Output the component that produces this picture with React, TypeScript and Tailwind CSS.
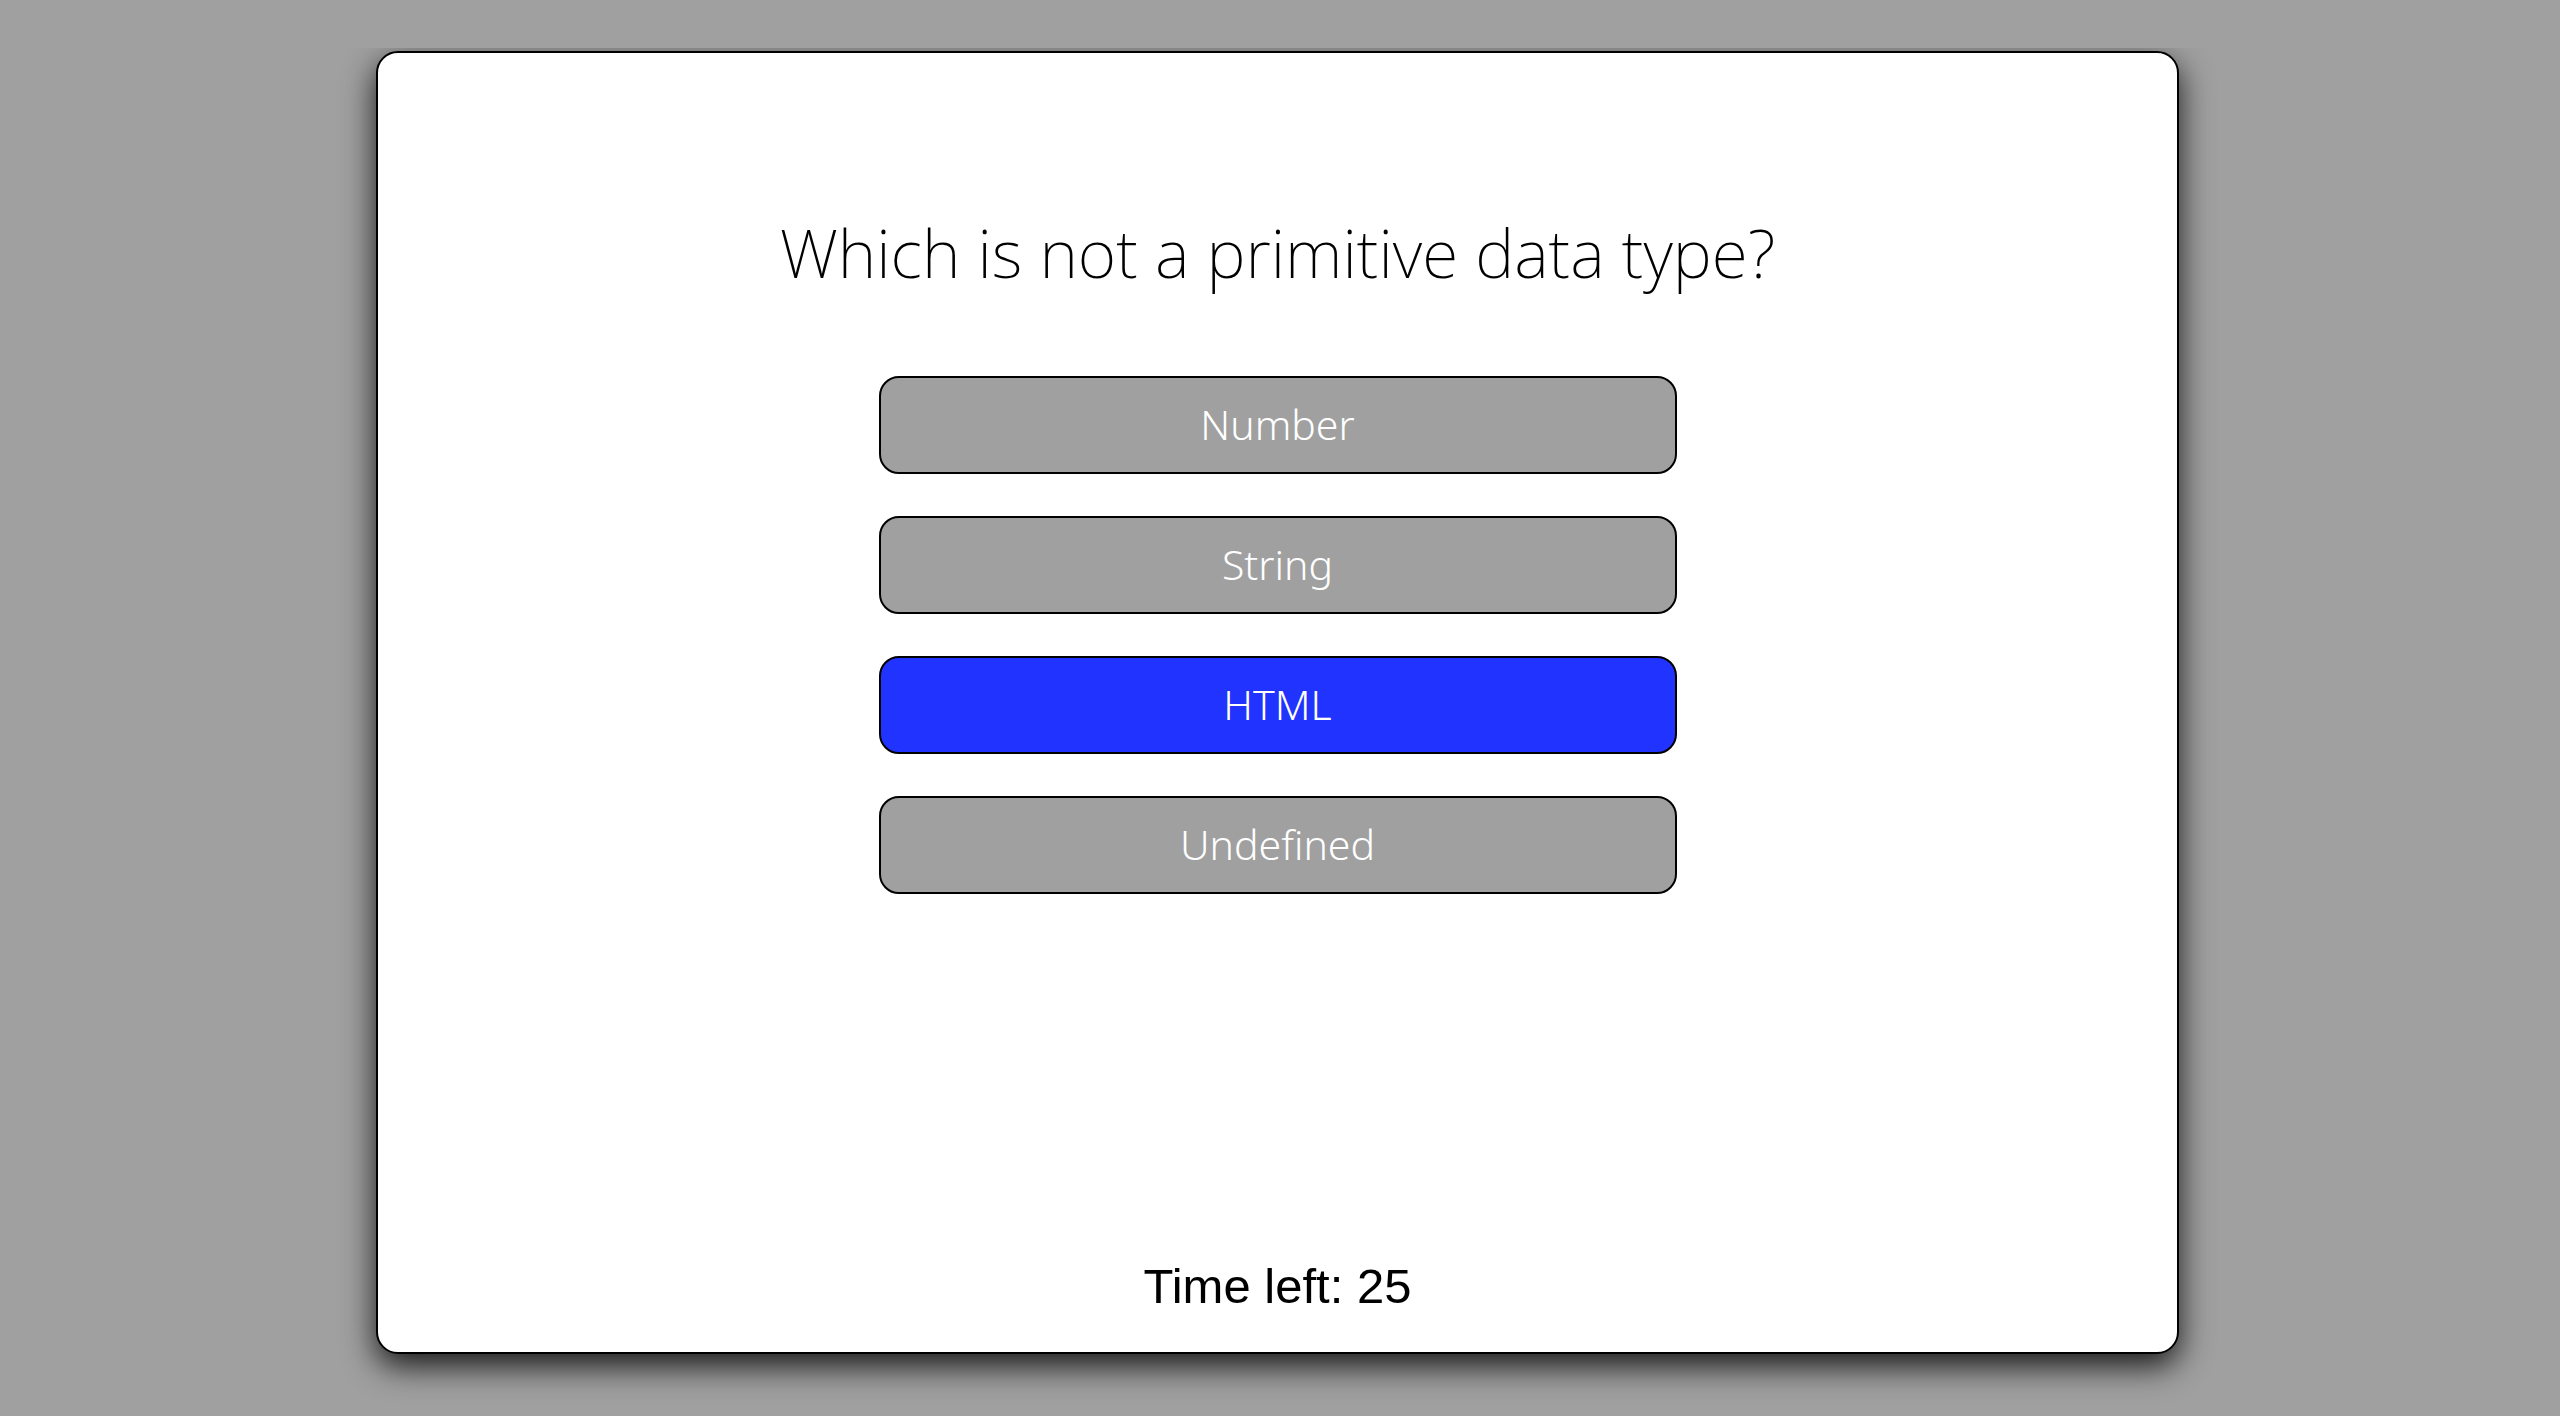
import React from "react";

const options = ["Number", "String", "HTML", "Undefined"];

export default function App() {
  return (
    <div className="h-[1416px] w-full bg-[#a0a0a0] overflow-hidden">
      <div className="mt-[48px] h-[1368px] overflow-hidden pt-[3px]">
        <div className="ml-[376px] flex h-[1303px] w-[1803px] flex-col items-center rounded-[22px] border-2 border-black bg-white shadow-[0_12px_32px_rgba(0,0,0,0.85)]">
          <h1
            className="mt-[149px] text-[66px] leading-[100px] text-black"
            style={{ fontFamily: "'Noto Sans', sans-serif", fontWeight: 200 }}
          >
            Which is not a primitive data type?
          </h1>
          <div className="mt-[74px] flex flex-col gap-[42px]">
            {options.map((o) => (
              <button
                key={o}
                className={`flex h-[98px] w-[798px] items-center justify-center rounded-[20px] border-2 border-black text-[41px] text-white ${
                  o === "HTML" ? "bg-[#2033ff]" : "bg-[#a0a0a0]"
                }`}
                style={{ fontFamily: "'Noto Sans', sans-serif", fontWeight: 300 }}
              >
                {o}
              </button>
            ))}
          </div>
          <div className="flex-1" />
          <div
            className="mb-[36px] text-[49px] leading-[60px] text-black"
            style={{ fontFamily: "'Liberation Sans', Arial, sans-serif" }}
          >
            Time left: 25
          </div>
        </div>
      </div>
    </div>
  );
}
